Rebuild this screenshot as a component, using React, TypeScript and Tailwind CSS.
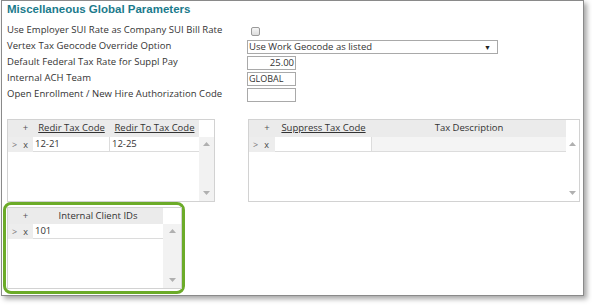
import React from "react";

const font = { fontFamily: '"Open Sans", "Noto Sans", sans-serif' };

function Up() {
  return (
    <svg width="7" height="4" viewBox="0 0 7 4">
      <polygon points="0,4 7,4 3.5,0" fill="#b0b0b0" />
    </svg>
  );
}
function Down() {
  return (
    <svg width="7" height="4" viewBox="0 0 7 4">
      <polygon points="0,0 7,0 3.5,4" fill="#b0b0b0" />
    </svg>
  );
}

function Label({ children }: { children: React.ReactNode }) {
  return <div className="w-[240px] text-[9.5px] tracking-[0.05px] leading-[16px] text-[#333]">{children}</div>;
}

export default function App() {
  return (
    <div className="w-[592px] h-[306px] bg-white" style={font}>
      <div className="ml-[1px] w-[583px] h-[296px] border border-[#8a8a8a] bg-white shadow-[3px_3px_5px_rgba(0,0,0,0.35)] flex flex-col">
        <div
          className="pl-[5px] pt-[1px] h-[21px] text-[11.5px] font-bold text-[#1b7b8c] leading-[14px]"
          style={{ fontFamily: '"Liberation Sans", Arial, sans-serif' }}
        >
          Miscellaneous Global Parameters
        </div>
        <div className="pl-[5px] flex flex-col">
          <div className="flex items-center h-[16px]">
            <Label>Use Employer SUI Rate as Company SUI Bill Rate</Label>
            <div className="ml-[4px] mt-[3px] w-[9px] h-[9px] border border-[#9a9a9a] rounded-[2px] bg-gradient-to-b from-[#f6f6f6] to-[#dcdcdc]" />
          </div>
          <div className="flex items-center h-[16px]">
            <Label>Vertex Tax Geocode Override Option</Label>
            <div className="mt-[2px] w-[251px] h-[14px] border border-[#a9a9a9] flex items-center justify-between pl-[1px] pr-[6px] text-[9.5px] text-[#333] leading-none">
              <span>Use Work Geocode as listed</span>
              <span className="text-[7px] text-[#222]">▼</span>
            </div>
          </div>
          <div className="flex items-center h-[16px]">
            <Label>Default Federal Tax Rate for Suppl Pay</Label>
            <div className="mt-[2px] w-[49px] h-[14px] border border-[#a9a9a9] text-right pr-[1px] text-[9.5px] leading-[12px] text-[#333]">
              25.00
            </div>
          </div>
          <div className="flex items-center h-[16px]">
            <Label>Internal ACH Team</Label>
            <div className="mt-[2px] w-[49px] h-[14px] border border-[#a9a9a9] pl-[1px] text-[9px] leading-[12px] text-[#333]">
              GLOBAL
            </div>
          </div>
          <div className="flex items-center h-[16px]">
            <Label>Open Enrollment / New Hire Authorization Code</Label>
            <div className="mt-[2px] w-[49px] h-[14px] border border-[#a9a9a9]" />
          </div>
        </div>

        {/* grids row */}
        <div className="mt-[17px] pl-[5px] flex gap-[33px]">
          {/* left grid */}
          <div className="w-[208px] h-[83px] border border-[#d2d2d2] flex text-[9.5px] text-[#333]">
            <div className="w-[191px] flex flex-col">
              <div className="h-[17px] bg-[#ebebeb] flex items-center">
                <div className="w-[25px] text-center pl-[10px] text-[#555]">+</div>
                <div className="w-[77px] text-center underline">Redir Tax Code</div>
                <div className="flex-1 text-center underline">Redir To Tax Code</div>
              </div>
              <div className="h-[15px] flex items-stretch bg-[#ededed]">
                <div className="w-[25px] flex items-center gap-[6px] pl-[4px] text-[9px] text-[#777]">
                  <span>&gt;</span>
                  <span className="text-[#444]">x</span>
                </div>
                <div className="w-[77px] bg-white border-b border-r border-[#dcdcdc] pl-[2px] leading-[14px]">12-21</div>
                <div className="flex-1 bg-white border-b border-[#dcdcdc] pl-[2px] leading-[14px]">12-25</div>
              </div>
              <div className="flex-1 bg-white" />
            </div>
            <div className="flex-1 flex flex-col">
              <div className="h-[17px] bg-white" />
              <div className="flex-1 bg-[#f2f2f2] flex flex-col items-center justify-between pt-[5px] pb-[6px]">
                <Up />
                <Down />
              </div>
            </div>
          </div>

          {/* right grid */}
          <div className="w-[332px] h-[83px] border border-[#d2d2d2] flex text-[9.5px] text-[#333]">
            <div className="w-[317px] flex flex-col">
              <div className="h-[17px] bg-[#ebebeb] flex items-center">
                <div className="w-[26px] text-center pl-[10px] text-[#555]">+</div>
                <div className="w-[97px] text-center underline">Suppress Tax Code</div>
                <div className="flex-1 text-center">Tax Description</div>
              </div>
              <div className="h-[15px] flex items-stretch bg-[#ededed]">
                <div className="w-[26px] flex items-center gap-[6px] pl-[4px] text-[9px] text-[#777]">
                  <span>&gt;</span>
                  <span className="text-[#444]">x</span>
                </div>
                <div className="w-[97px] bg-white border-b border-r border-[#dcdcdc]" />
                <div className="flex-1 bg-[#f4f4f4] border-b border-[#dcdcdc]" />
              </div>
              <div className="flex-1 bg-white" />
            </div>
            <div className="flex-1 flex flex-col">
              <div className="h-[17px] bg-white" />
              <div className="flex-1 bg-white flex flex-col items-center justify-between pt-[5px] pb-[6px]">
                <Up />
                <Down />
              </div>
            </div>
          </div>
        </div>

        {/* bottom grid with green highlight */}
        <div className="pl-[1px]">
          <div className="w-[182px] h-[92px] border-[3px] border-[#6cab29] rounded-[8px] pt-[2px] pl-[1px]">
            <div className="w-[175px] h-[82px] border border-[#d2d2d2] flex text-[9.5px] text-[#333]">
              <div className="w-[155px] flex flex-col">
                <div className="h-[16px] bg-[#ebebeb] flex items-center">
                  <div className="w-[25px] text-center pl-[10px] text-[#555]">+</div>
                  <div className="flex-1 text-center">Internal Client IDs</div>
                </div>
                <div className="h-[15px] flex items-stretch bg-[#ededed]">
                  <div className="w-[25px] flex items-center gap-[6px] pl-[4px] text-[9px] text-[#777]">
                    <span>&gt;</span>
                    <span className="text-[#444]">x</span>
                  </div>
                  <div className="flex-1 bg-white border-b border-[#dcdcdc] pl-[2px] leading-[14px]">101</div>
                </div>
                <div className="flex-1 bg-white" />
              </div>
              <div className="flex-1 flex flex-col">
                <div className="h-[16px] bg-white" />
                <div className="flex-1 bg-[#f2f2f2] flex flex-col items-center justify-between pt-[5px] pb-[6px]">
                  <Up />
                  <Down />
                </div>
              </div>
            </div>
          </div>
        </div>
      </div>
    </div>
  );
}
